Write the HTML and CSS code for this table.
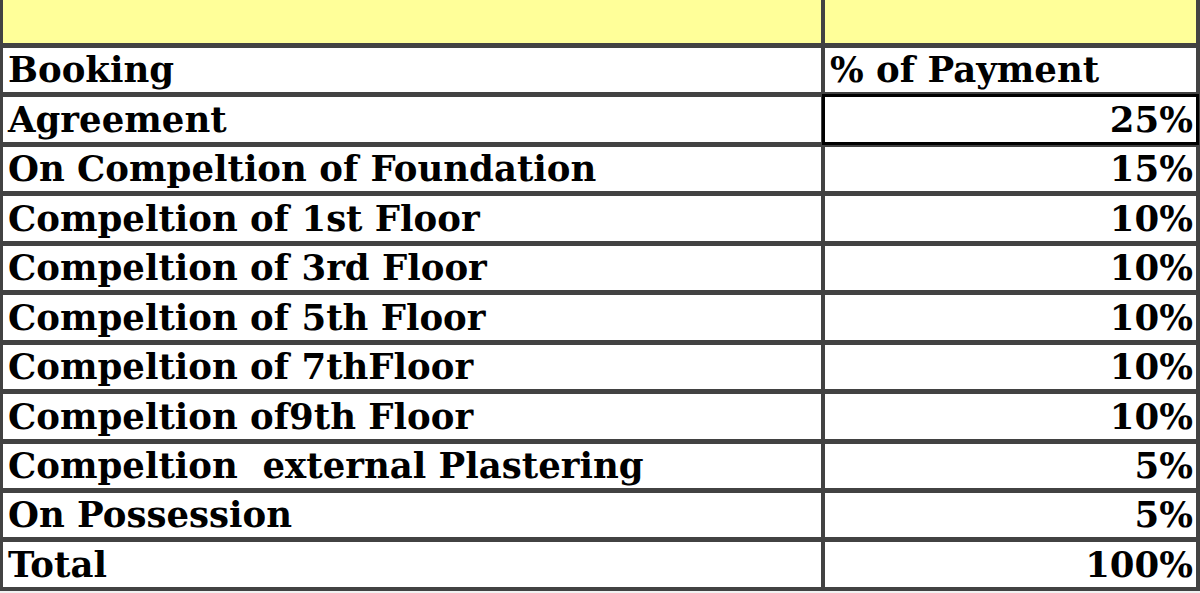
FILE: index.html
```html
<!DOCTYPE html>
<html>
<head>
<meta charset="utf-8">
<link rel="stylesheet" href="styles.css">
</head>
<body>
<div class="sheet">
  <div class="cell head-yellow"></div>
  <div class="cell head-yellow"></div>

  <div class="cell">Booking</div>
  <div class="cell">% of Payment</div>

  <div class="cell">Agreement</div>
  <div class="cell num selected">25%</div>

  <div class="cell">On Compeltion of Foundation</div>
  <div class="cell num">15%</div>

  <div class="cell">Compeltion of 1st Floor</div>
  <div class="cell num">10%</div>

  <div class="cell">Compeltion of 3rd Floor</div>
  <div class="cell num">10%</div>

  <div class="cell">Compeltion of 5th Floor</div>
  <div class="cell num">10%</div>

  <div class="cell">Compeltion of 7thFloor</div>
  <div class="cell num">10%</div>

  <div class="cell">Compeltion of9th Floor</div>
  <div class="cell num">10%</div>

  <div class="cell">Compeltion &nbsp;external Plastering</div>
  <div class="cell num">5%</div>

  <div class="cell">On Possession</div>
  <div class="cell num">5%</div>

  <div class="cell">Total</div>
  <div class="cell num">100%</div>
</div>
</body>
</html>
```

FILE: styles.css
```css
html, body {
  margin: 0;
  padding: 0;
  background: #f2f2f2;
}

body {
  width: 1200px;
  height: 593px;
  overflow: hidden;
  font-family: "DejaVu Serif", "Liberation Serif", serif;
  font-weight: bold;
  color: #000;
}

.sheet {
  display: grid;
  grid-template-columns: 818px 371px;
  grid-template-rows: 43px;
  grid-auto-rows: 44.45px;
  column-gap: 4px;
  row-gap: 5px;
  padding: 0 4px 4px 3px;
  background: #424242;
}

.cell {
  background: #fff;
  display: flex;
  align-items: center;
  padding: 0 0 0 5px;
  font-size: 35.5px;
  line-height: 1;
  white-space: pre;
  overflow: hidden;
}

.head-yellow {
  background: #ffff99;
}

.num {
  justify-content: flex-end;
  padding: 0 3px 0 0;
}

.selected {
  outline: 3px solid #000;
  position: relative;
  z-index: 1;
}
```
